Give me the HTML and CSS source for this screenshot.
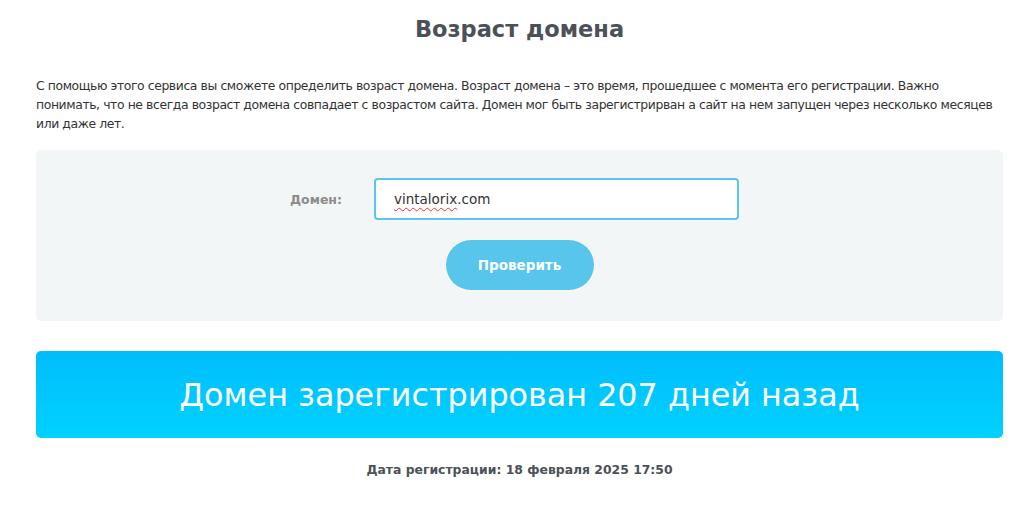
FILE: index.html
```html
<!DOCTYPE html>
<html lang="ru">
<head>
<meta charset="utf-8">
<title>Возраст домена</title>
<link rel="stylesheet" href="styles.css">
</head>
<body>
<main class="page">
  <h1 class="title">Возраст домена</h1>
  <p class="intro">С помощью этого сервиса вы сможете определить возраст домена. Возраст домена – это время, прошедшее с момента его регистрации. Важно понимать, что не всегда возраст домена совпадает с возрастом сайта. Домен мог быть зарегистрирван а сайт на нем запущен через несколько месяцев или даже лет.</p>
  <form class="check-box">
    <div class="field-row">
      <label class="field-label" for="domain">Домен:</label>
      <div class="field-input"><span class="misspelled">vintalorix</span>.com</div>
    </div>
    <div class="btn-row">
      <button type="button" class="btn">Проверить</button>
    </div>
  </form>
  <div class="result">Домен зарегистрирован 207 дней назад</div>
  <p class="reg-date">Дата регистрации: 18 февраля 2025 17:50</p>
</main>
</body>
</html>
```
FILE: styles.css
```css
* { box-sizing: border-box; }
html, body { margin: 0; padding: 0; background: #fff; }
body { font-family: "DejaVu Sans", "Noto Sans", sans-serif; color: #333; }
.page { padding: 0 20px 0 36px; }
.title {
  margin: 0;
  padding-top: 15px;
  height: 44px;
  text-align: center;
  font-size: 22.5px;
  font-weight: 700;
  color: #4b5157;
  line-height: 28px;
}
.intro {
  margin: 32px 0 0;
  font-size: 12.4px;
  line-height: 19px;
  color: #333;
  letter-spacing: -0.4px;
}
.check-box {
  margin-top: 17px;
  background: #f3f6f7;
  border-radius: 5px;
  height: 171px;
  padding-top: 28px;
  display: flex;
  flex-direction: column;
  align-items: center;
}
.field-row {
  display: flex;
  align-items: center;
  margin-left: -26px;
}
.field-label {
  width: 100px;
  text-align: right;
  padding-right: 32px;
  font-size: 12.5px;
  font-weight: 700;
  color: #8b8b8b;
}
.field-input {
  width: 365px;
  height: 42px;
  border: 2px solid #5cc5ef;
  border-radius: 4px;
  background: #fff;
  padding: 0 0 0 18px;
  display: flex;
  align-items: center;
  font-size: 13.5px;
  color: #333;
}
.misspelled {
  text-decoration: underline wavy #e33;
  text-decoration-thickness: 1px;
  text-underline-offset: 3px;
}
.btn-row { margin-top: 20px; }
.btn {
  width: 148px;
  height: 50px;
  border: 0;
  border-radius: 25px;
  background: #57c5ec;
  color: #fff;
  font-family: inherit;
  font-size: 13.5px;
  font-weight: 700;
  cursor: pointer;
}
.result {
  margin-top: 30px;
  height: 87px;
  border-radius: 5px;
  background: linear-gradient(to bottom, #00bdfe, #00d2fe);
  color: #fff;
  display: flex;
  align-items: center;
  justify-content: center;
  font-size: 31.8px;
  font-weight: 400;
}
.reg-date {
  margin: 24px 0 0;
  text-align: center;
  font-size: 12.4px;
  font-weight: 700;
  color: #4b5157;
}
```
